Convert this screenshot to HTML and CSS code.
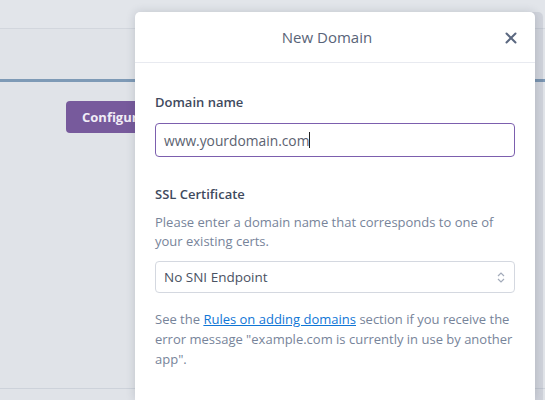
FILE: index.html
```html
<!DOCTYPE html>
<html>
<head>
<meta charset="utf-8">
<link rel="stylesheet" href="styles.css">
</head>
<body>
<div class="page">
  <div class="topbar"></div>
  <div class="tabs"></div>
  <div class="content">
    <button class="btn-config">Configure Add-ons</button>
  </div>
  <div class="footer"></div>

  <div class="modal">
    <div class="modal-header">
      <span class="modal-title">New Domain</span>
      <svg class="close" width="12" height="12" viewBox="0 0 12 12"><path d="M1.5 1.5 L10.5 10.5 M10.5 1.5 L1.5 10.5" stroke="#5b6880" stroke-width="2" stroke-linecap="round"/></svg>
    </div>
    <div class="modal-body">
      <label class="label">Domain name</label>
      <div class="input"><span class="value">www.yourdomain.com</span><span class="caret"></span></div>

      <label class="label label-ssl">SSL Certificate</label>
      <p class="desc">Please enter a domain name that corresponds to one of your existing certs.</p>
      <div class="select">
        <span class="value">No SNI Endpoint</span>
        <svg class="chev" width="8" height="11" viewBox="0 0 8 11"><path d="M1 4 L4 1 L7 4 M1 7 L4 10 L7 7" fill="none" stroke="#a3abba" stroke-width="1.2"/></svg>
      </div>
      <p class="help">See the <a href="#">Rules on adding domains</a> section if you receive the error message "example.com is currently in use by another app".</p>
    </div>
  </div>
</div>
</body>
</html>
```
FILE: styles.css
```css
html, body {
  margin: 0;
  padding: 0;
}
body {
  width: 545px;
  height: 400px;
  overflow: hidden;
  background: #e0e3e8;
  font-family: "Open Sans", "Liberation Sans", sans-serif;
}
.page {
  position: relative;
  width: 545px;
  height: 400px;
  display: flex;
  flex-direction: column;
  overflow: hidden;
}
.topbar {
  height: 28px;
  border-bottom: 1px solid #d2d6dd;
  background: #e2e5ea;
}
.tabs {
  height: 50px;
  border-bottom: 3px solid #7e9ab6;
}
.content {
  flex: 1;
  padding: 19px 0 0 66px;
  border-bottom: 1px solid #cdd2da;
  margin-bottom: 11px;
}
.btn-config {
  height: 32px;
  padding: 0 16px;
  background: #775a9c;
  color: #f1ecf6;
  border: none;
  border-radius: 4px;
  font-family: inherit;
  font-weight: 700;
  font-size: 13px;
  white-space: nowrap;
}
.footer {
  height: 0;
}
.modal {
  position: absolute;
  left: 135px;
  top: 12px;
  width: 400px;
  height: 388px;
  background: #ffffff;
  border-radius: 5px 5px 0 0;
  box-shadow: 0 0 10px rgba(40, 50, 70, 0.18), 8px 0 0 0 rgba(60, 70, 95, 0.1);
}
.modal-header {
  height: 50px;
  border-bottom: 1px solid #e8eaf0;
  display: flex;
  align-items: center;
  justify-content: center;
  padding-right: 16px;
  position: relative;
}
.modal-title {
  font-size: 15px;
  color: #596478;
}
.close {
  position: absolute;
  right: 18px;
  top: 20px;
}
.modal-body {
  padding: 30px 20px 0 20px;
  display: flex;
  flex-direction: column;
}
.label {
  font-size: 13px;
  font-weight: 600;
  color: #3f4a5e;
  line-height: 18px;
}
.input {
  margin-top: 12px;
  height: 34px;
  box-sizing: border-box;
  border: 1px solid #7c5fae;
  border-radius: 4px;
  padding: 0 8px;
  display: flex;
  align-items: center;
  font-size: 13.8px;
  color: #5b6270;
}
.caret {
  display: inline-block;
  width: 1px;
  height: 16px;
  background: #222;
}
.label-ssl {
  margin-top: 28px;
}
.desc {
  margin: 10px 0 0 0;
  font-size: 13px;
  line-height: 19px;
  color: #77849a;
}
.select {
  margin-top: 10px;
  height: 32px;
  box-sizing: border-box;
  border: 1px solid #d4d8e0;
  border-radius: 4px;
  padding: 0 9px 0 8px;
  display: flex;
  align-items: center;
  justify-content: space-between;
  font-size: 13.5px;
  color: #4a5263;
}
.help {
  margin: 16px 0 0 0;
  font-size: 13px;
  line-height: 20px;
  color: #77849a;
}
.help a {
  color: #1076d6;
  text-decoration: underline;
}
```
